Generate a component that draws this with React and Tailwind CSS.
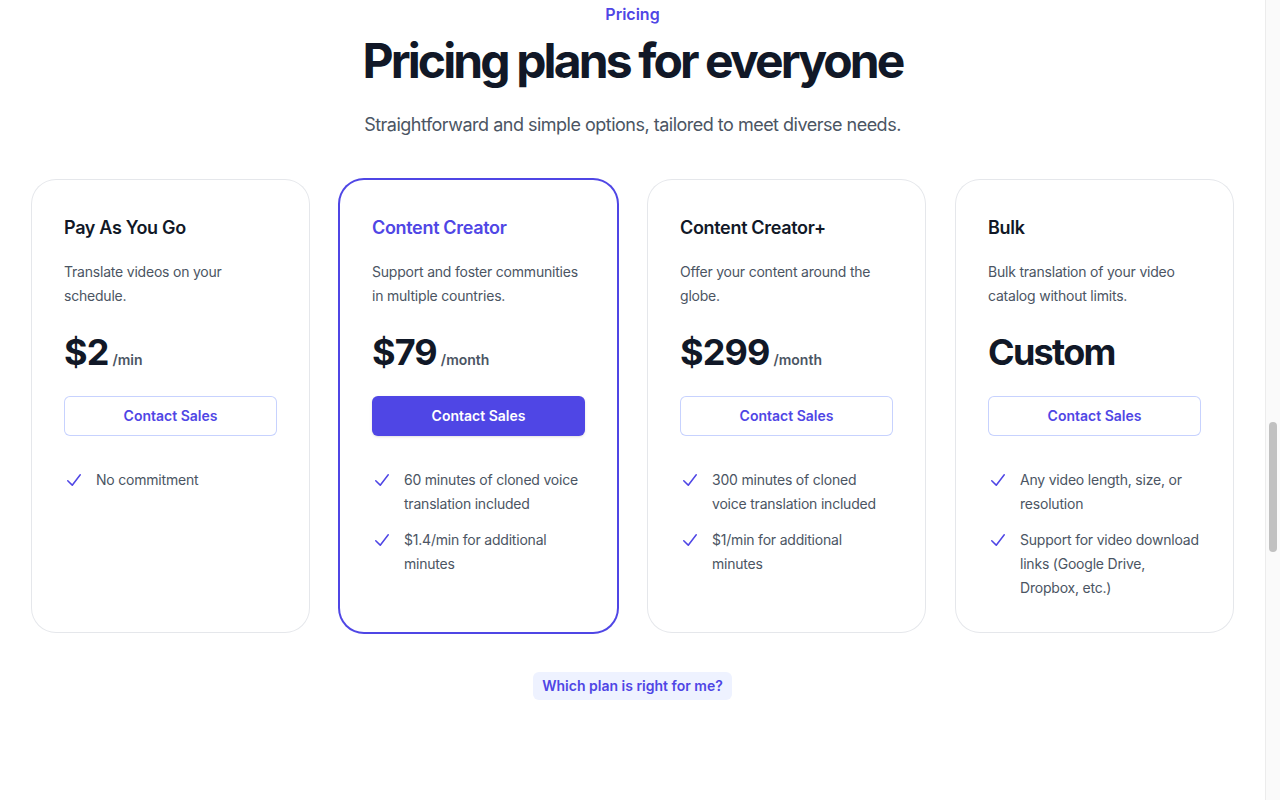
const tiers = [
  {
    name: "Pay As You Go",
    description: "Translate videos on your schedule.",
    price: "$2",
    unit: "/min",
    features: ["No commitment"],
  },
  {
    name: "Content Creator",
    description: "Support and foster communities in multiple countries.",
    price: "$79",
    unit: "/month",
    featured: true,
    features: [
      "60 minutes of cloned voice translation included",
      "$1.4/min for additional minutes",
    ],
  },
  {
    name: "Content Creator+",
    description: "Offer your content around the globe.",
    price: "$299",
    unit: "/month",
    features: [
      "300 minutes of cloned voice translation included",
      "$1/min for additional minutes",
    ],
  },
  {
    name: "Bulk",
    description: "Bulk translation of your video catalog without limits.",
    price: "Custom",
    features: [
      "Any video length, size, or resolution",
      "Support for video download links (Google Drive, Dropbox, etc.)",
    ],
  },
];

function CheckIcon() {
  return (
    <svg viewBox="0 0 20 20" fill="currentColor" className="h-6 w-5 flex-none text-[#4f46e5]">
      <path
        fillRule="evenodd"
        d="M16.704 4.153a.75.75 0 01.143 1.052l-8 10.5a.75.75 0 01-1.127.075l-4.5-4.5a.75.75 0 011.06-1.06l3.894 3.893 7.48-9.817a.75.75 0 011.05-.143z"
        clipRule="evenodd"
      />
    </svg>
  );
}

export default function App() {
  return (
    <div className="flex h-screen bg-white font-['Inter',sans-serif] overflow-hidden">
      <main className="flex-1 px-8">
        {/* header */}
        <div className="text-center">
          <p className="text-base leading-7 font-semibold text-[#4f46e5]">Pricing</p>
          <h2 className="mt-[9px] text-5xl leading-none font-bold tracking-[-0.06em] text-[#111827]">
            Pricing plans for everyone
          </h2>
          <p className="mt-6 text-lg leading-8 tracking-[-0.028em] text-[#4b5563]">
            Straightforward and simple options, tailored to meet diverse needs.
          </p>
        </div>

        {/* cards */}
        <div className="mt-[39px] grid grid-cols-4 gap-[31px]">
          {tiers.map((tier) => (
            <div
              key={tier.name}
              className={
                tier.featured
                  ? "rounded-3xl p-8 ring-2 ring-[#4f46e5]"
                  : "rounded-3xl p-8 ring-1 ring-[#e5e7eb]"
              }
            >
              <h3
                className={
                  tier.featured
                    ? "text-lg leading-8 font-semibold tracking-[-0.018em] text-[#4f46e5]"
                    : "text-lg leading-8 font-semibold tracking-[-0.018em] text-[#111827]"
                }
              >
                {tier.name}
              </h3>
              <p className="mt-4 text-sm leading-6 tracking-[-0.015em] text-[#4b5563]">{tier.description}</p>
              <p className="mt-6 flex items-baseline gap-x-1">
                <span
                  className={
                    tier.unit
                      ? "text-4xl font-bold tracking-tight text-[#111827]"
                      : "text-4xl font-bold tracking-[-0.048em] text-[#111827]"
                  }
                >
                  {tier.price}
                </span>
                {tier.unit && (
                  <span className="text-sm leading-6 font-semibold text-[#4b5563]">{tier.unit}</span>
                )}
              </p>
              <a
                href="#"
                className={
                  tier.featured
                    ? "mt-6 block rounded-md bg-[#4f46e5] px-3 py-2 text-center text-sm leading-6 font-semibold text-white shadow-sm"
                    : "mt-6 block rounded-md px-3 py-2 text-center text-sm leading-6 font-semibold text-[#4f46e5] ring-1 ring-inset ring-[#c7d2fe]"
                }
              >
                Contact Sales
              </a>
              <ul className="mt-8 space-y-3 text-sm leading-6 tracking-[-0.015em] text-[#4b5563]">
                {tier.features.map((f) => (
                  <li key={f} className="flex gap-x-3">
                    <CheckIcon />
                    {f}
                  </li>
                ))}
              </ul>
            </div>
          ))}
        </div>

        <div className="mt-10 flex justify-center">
          <a
            href="#"
            className="rounded-md bg-[#eef2ff] px-[9px] py-0.5 text-sm leading-6 font-semibold text-[#4f46e5]"
          >
            Which plan is right for me?
          </a>
        </div>
      </main>

      {/* scrollbar */}
      <div className="w-[15px] flex-none border-l border-[#ececec] bg-[#fafafa] px-[3px]">
        <div className="mt-[422px] h-[130px] rounded-full bg-[#c1c1c1]" />
      </div>
    </div>
  );
}
